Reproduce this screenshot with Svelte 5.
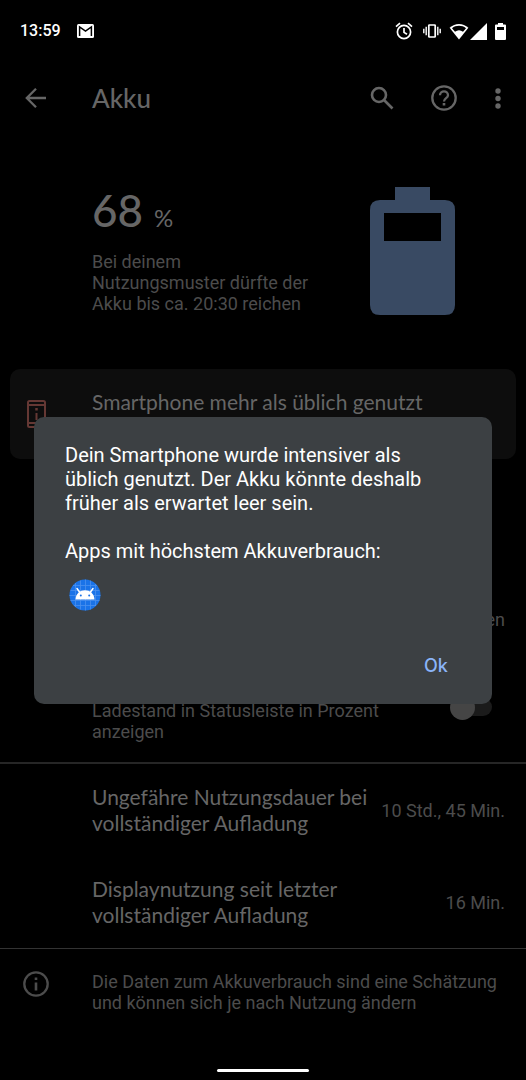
<script>
    const usage = [
        { label: 'Ungefähre Nutzungsdauer bei vollständiger Aufladung', value: '10 Std., 45 Min.' },
        { label: 'Displaynutzung seit letzter vollständiger Aufladung', value: '16 Min.' }
    ];

    let showPercent = $state(false);
    let dialogOpen = $state(true);
</script>

<div class="screen">
    <header class="status-bar">
        <time>13:59</time>
        <svg width="17" height="14" viewBox="0 0 17 14">
            <rect width="17" height="14" rx="1.5" fill="#fff"/>
            <path d="M2.600 12V3l5.900 4.200L14.400 3v9" fill="none" stroke="#000" stroke-width="1.500"/>
        </svg>
        <div class="status-icons">
            <svg width="18" height="18" viewBox="0 0 18 18" fill="none" stroke="#fff" stroke-width="1.7">
                <circle cx="9" cy="10" r="6.6"/>
                <path d="M1 4.6l4-3.4M17 4.6l-4-3.4M9 6v4.4l3 1.9"/>
            </svg>
            <svg class="vibrate" width="18" height="14" viewBox="0 0 18 14" fill="none" stroke="#fff">
                <rect x="5.8" y="1" width="6.4" height="12" rx=".6" stroke-width="1.7"/>
                <path d="M3.2 2.8v8.4M14.8 2.8v8.4M.8 4.8v4.4M17.2 4.8v4.4" stroke-width="1.4"/>
            </svg>
            <svg width="20" height="17" viewBox="0 0 20 17">
                <path d="M.6 4.8C6 -.4 14 -.4 19.4 4.8L10 16.500z" fill="#fff"/>
                <path d="M3 5.200C7 2 13 2 17 5.200L14 8.800C11.400 6.800 8.600 6.800 6 8.800z" fill="#000"/>
            </svg>
            <svg class="signal" width="17" height="17" viewBox="0 0 17 17" fill="#fff">
                <path d="M17 0v17H0z"/>
            </svg>
            <svg width="11" height="17" viewBox="0 0 11 17" fill="#fff">
                <path fill-rule="evenodd" d="M3 0h5v1.5h2q1 0 1 1V16q0 1-1 1H1q-1 0-1-1V2.500q0-1 1-1h2zM2 4v3h7V4z"/>
            </svg>
        </div>
    </header>

    <nav class="app-bar">
        <button class="icon-button" aria-label="Zurück">
            <svg width="22" height="20" viewBox="0 0 22 20" fill="none" stroke="currentColor" stroke-width="2.300">
                <path d="M21 10H2M11 .8L1.800 10l9.200 9.200"/>
            </svg>
        </button>
        <h1>Akku</h1>
        <div class="actions">
            <button class="icon-button" aria-label="Suchen">
                <svg width="24" height="24" viewBox="0 0 24 24" fill="none" stroke="currentColor" stroke-width="2.600">
                    <circle cx="9" cy="9" r="7"/>
                    <path d="M14 14l8.500 8.500"/>
                </svg>
            </button>
            <button class="icon-button" aria-label="Hilfe">
                <svg width="26" height="26" viewBox="0 0 26 26" fill="none" stroke="currentColor" stroke-width="2.300">
                    <circle cx="13" cy="13" r="11.700"/>
                    <path d="M9 10.200c0-5.200 8-5.200 8 0 0 2.800-4 3-4 6.200"/>
                    <path d="M13 18v2.500" stroke-width="2.600"/>
                </svg>
            </button>
            <button class="icon-button" aria-label="Weitere Optionen">
                <svg width="6" height="21" viewBox="0 0 6 21" fill="currentColor">
                    <circle cx="3" cy="3" r="2.700"/>
                    <circle cx="3" cy="10.500" r="2.700"/>
                    <circle cx="3" cy="18" r="2.700"/>
                </svg>
            </button>
        </div>
    </nav>

    <main>
        <section class="summary">
            <div class="level">
                <div class="percent">
                    <strong>68</strong>
                    <span>%</span>
                </div>
                <p class="secondary">Bei deinem Nutzungsmuster dürfte der Akku bis ca. 20:30 reichen</p>
            </div>
            <svg width="85" height="128" viewBox="0 0 85 128">
                <path fill="#394a63" fill-rule="evenodd" d="M25 0h35v13h15q10 0 10 10v95q0 10-10 10H10q-10 0-10-10V23q0-10 10-10h15zM14 26v28h57V26z"/>
            </svg>
        </section>

        <section class="tip">
            <svg width="19" height="28" viewBox="0 0 19 28" fill="none" stroke="#653834" stroke-width="2">
                <rect x="1" y="1" width="17" height="26" rx="1.500"/>
                <path d="M1 5h17M1 23h17M9.500 13v7"/>
                <path d="M9.500 8v2.500" stroke-width="2.500"/>
            </svg>
            <h2>Smartphone mehr als üblich genutzt</h2>
        </section>

        <p class="last-charge secondary">en</p>

        <label class="row toggle">
            <span class="secondary">Ladestand in Statusleiste in Prozent anzeigen</span>
            <input type="checkbox" role="switch" bind:checked={showPercent}/>
        </label>

        <section class="usage">
            {#each usage as item}
            <div class="row">
                <h2>{item.label}</h2>
                <span class="secondary">{item.value}</span>
            </div>
            {/each}
        </section>

        <footer>
            <svg width="26" height="26" viewBox="0 0 26 26" fill="none" stroke="#4c4c4c" stroke-width="2.300">
                <circle cx="13" cy="13" r="11.700"/>
                <path d="M13 11.500v8M13 6.500v2.600" stroke-width="2.600"/>
            </svg>
            <p class="secondary">Die Daten zum Akkuverbrauch sind eine Schätzung und können sich je nach Nutzung ändern</p>
        </footer>
    </main>

    <div class="home-bar"></div>

    {#if dialogOpen}
    <div class="overlay">
        <div class="dialog" role="dialog" aria-modal="true" aria-labelledby="dialog-text">
            <p id="dialog-text">Dein Smartphone wurde intensiver als üblich genutzt. Der Akku könnte deshalb früher als erwartet leer sein.</p>
            <p>Apps mit höchstem Akkuverbrauch:</p>
            <svg class="app-icon" width="32" height="32" viewBox="0 0 32 32">
                <circle cx="16" cy="16" r="15.500" fill="#1a73e8"/>
                <path d="M6.500 4v24M11.500 1.500v29M16.500 .5v31M21.500 1.500v29M26.500 5v22M4 6.500h24M1.500 11.500h29M.5 16.500h31M1.500 21.500h29M5 26.500h22" stroke="#4a90ee" stroke-width=".8"/>
                <path d="M10.500 13L8 9.500M21.500 13l2.500-3.500" stroke="#fff" stroke-width="1.500" stroke-linecap="round"/>
                <path d="M6.500 20.500C7 8 25 8 25.500 20.500z" fill="#fff"/>
                <circle cx="11.800" cy="16.500" r="1" fill="#1a73e8"/>
                <circle cx="20.200" cy="16.500" r="1" fill="#1a73e8"/>
            </svg>
            <button class="ok" onclick={() => dialogOpen = false}>Ok</button>
        </div>
    </div>
    {/if}
</div>

<style>
    :global(body) {
        margin: 0;
        background: #000;
    }

    .screen {
        display: flex;
        flex-direction: column;
        min-height: 100vh;
        background: #000;
        color: #666;
        font-family: Roboto, "Noto Sans", sans-serif;
    }

    h1, h2, p {
        margin: 0;
    }

    svg {
        display: block;
        flex: none;
    }

    button {
        padding: 0;
        border: none;
        background: none;
        color: inherit;
        font: inherit;
        cursor: pointer;
    }

    h2 {
        font: 400 21px/26px Lato, Roboto, sans-serif;
    }

    .secondary {
        color: #4c4c4c;
        font-size: 18px;
        line-height: 21px;
    }

    .status-bar {
        display: flex;
        align-items: center;
        gap: 16px;
        height: 62px;
        padding: 0 20px;
        color: #fff;
    }

    .status-bar time {
        font: 500 16px/20px Roboto, sans-serif;
    }

    .status-icons {
        display: flex;
        align-items: center;
        gap: 8px;
        margin-left: auto;
    }

    .vibrate {
        margin-left: 2px;
    }

    .signal {
        margin-left: -7px;
    }

    .app-bar {
        display: flex;
        align-items: center;
        height: 72px;
        padding: 0 8px 0 16px;
    }

    .icon-button {
        display: flex;
        align-items: center;
        justify-content: center;
        width: 40px;
        height: 48px;
    }

    h1 {
        margin-left: 36px;
        font: 500 26px/30px Lato, Roboto, sans-serif;
    }

    .actions {
        display: flex;
        gap: 22px;
        margin-left: auto;
    }

    .actions .icon-button:last-child {
        margin-left: -8px;
    }

    .summary {
        display: flex;
        justify-content: space-between;
        padding: 53px 71px 54px 92px;
    }

    .level {
        width: 220px;
    }

    .percent {
        display: flex;
        align-items: baseline;
        gap: 11px;
        height: 48px;
        margin-bottom: 16px;
        font-family: Lato, Roboto, sans-serif;
    }

    .percent strong {
        font-size: 44px;
        font-weight: 500;
        line-height: 46px;
    }

    .percent span {
        font-size: 24px;
        line-height: 24px;
    }

    .tip {
        display: flex;
        gap: 46px;
        box-sizing: border-box;
        height: 90px;
        margin: 0 10px;
        padding: 20px 17px;
        border-radius: 10px;
        background: #0d0d0d;
    }

    .tip svg {
        margin-top: 11px;
    }

    .last-charge {
        padding: 150px 21px 0;
        text-align: right;
    }

    .row {
        display: flex;
        align-items: center;
        justify-content: space-between;
        gap: 8px;
        min-height: 92px;
        padding: 0 21px 0 92px;
    }

    .row h2 {
        max-width: 284px;
    }

    .row span {
        white-space: nowrap;
    }

    .toggle {
        align-items: flex-start;
        min-height: 64px;
        margin-top: 68px;
        padding-right: 34px;
    }

    .toggle span {
        max-width: 300px;
        padding-top: 2px;
        white-space: normal;
    }

    .toggle input {
        appearance: none;
        display: flex;
        align-items: center;
        width: 42px;
        height: 18px;
        margin: 0;
        border-radius: 9px;
        background: linear-gradient(90deg, transparent 12px, #1b1b1b 12px);
    }

    .toggle input::before {
        content: "";
        width: 25px;
        height: 25px;
        border-radius: 50%;
        background: #454545;
    }

    .toggle input:checked::before {
        margin-left: auto;
    }

    .usage {
        border-top: 2px solid #262626;
        border-bottom: 1px solid #333;
    }

    footer {
        display: flex;
        gap: 43px;
        padding: 22px 21px 40px 23px;
    }

    .home-bar {
        width: 92px;
        height: 3px;
        margin: auto auto 8px;
        border-radius: 2px;
        background: #fff;
    }

    .overlay {
        position: fixed;
        inset: 63px 0 22px;
        display: flex;
        align-items: center;
        padding: 0 34px;
    }

    .dialog {
        display: flex;
        flex-direction: column;
        gap: 24px;
        box-sizing: border-box;
        width: 100%;
        padding: 26px 32px 14px 31px;
        border-radius: 10px;
        background: #3c4043;
        color: #fff;
        font-size: 20px;
        line-height: 24px;
    }

    .dialog p {
        padding-right: 16px;
    }

    .app-icon {
        margin: -8px 0 0 4px;
    }

    .ok {
        align-self: flex-end;
        width: 48px;
        height: 48px;
        margin-top: 7px;
        color: #8ab4f8;
        font: 500 18px/24px Inter, Roboto, sans-serif;
    }
</style>
